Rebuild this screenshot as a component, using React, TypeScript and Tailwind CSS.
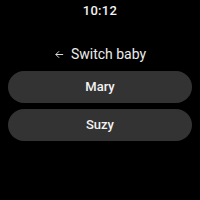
export default function App() {
  const babies = ['Mary', 'Suzy'];

  return (
    <div
      className="w-[200px] h-[200px] bg-black text-white flex flex-col items-center overflow-hidden"
      style={{ fontFamily: 'Roboto, "Liberation Sans", sans-serif' }}
    >
      <div className="mt-[3px] text-[13px] leading-[16px] font-medium tracking-wide text-[#f2f2f2]">10:12</div>

      <div className="mt-[25px] flex items-center gap-[6px] text-[#ececec]">
        <svg width="11" height="11" viewBox="0 0 24 24" fill="none" stroke="currentColor" strokeWidth="2">
          <path d="M20 12H4M11 5l-7 7 7 7" />
        </svg>
        <span className="text-[14px] leading-[20px]">Switch baby</span>
      </div>

      <div className="mt-[7px] w-full px-[8px] flex flex-col gap-[6px]">
        {babies.map(name => (
          <button
            key={name}
            className="w-full h-[32px] rounded-full bg-[#333333] text-[13px] font-medium text-[#f2f2f2]"
          >
            {name}
          </button>
        ))}
      </div>
    </div>
  );
}
